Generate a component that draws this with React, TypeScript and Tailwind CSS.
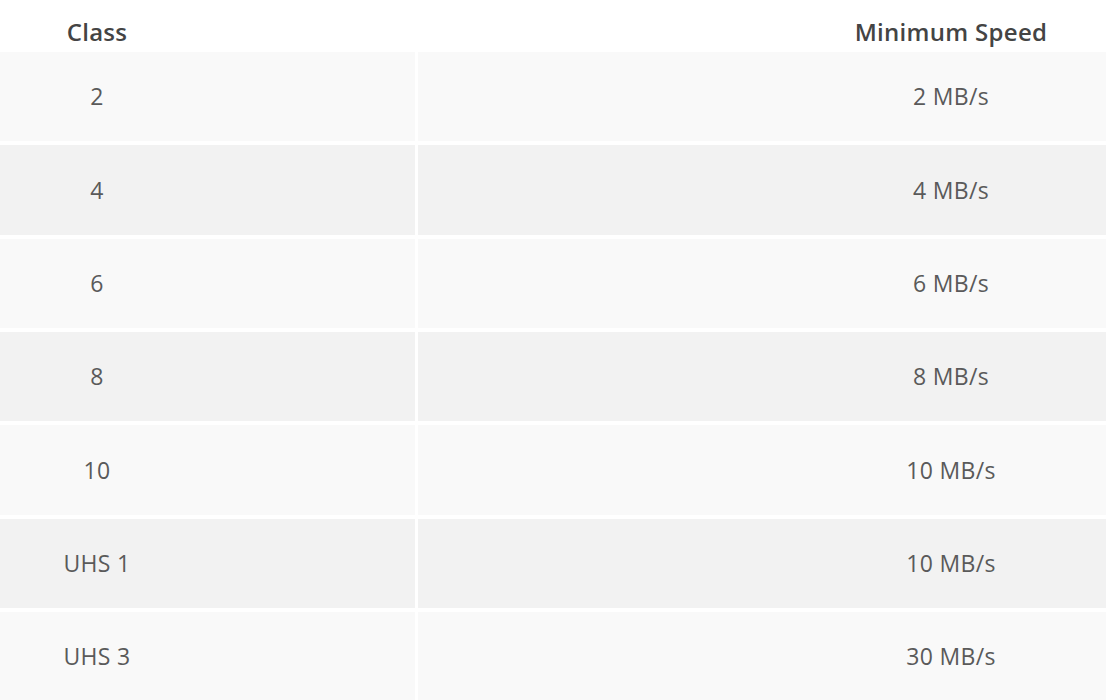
const rows = [
  { cls: "2", speed: "2 MB/s" },
  { cls: "4", speed: "4 MB/s" },
  { cls: "6", speed: "6 MB/s" },
  { cls: "8", speed: "8 MB/s" },
  { cls: "10", speed: "10 MB/s" },
  { cls: "UHS 1", speed: "10 MB/s" },
  { cls: "UHS 3", speed: "30 MB/s" },
];

export default function App() {
  return (
    <div
      className="w-[1106px] h-[700px] overflow-hidden bg-white"
      style={{ fontFamily: '"Open Sans", "Liberation Sans", sans-serif' }}
    >
      {/* Header */}
      <div className="flex h-[52px] items-center pt-[12px] text-[24px] font-semibold tracking-[0.3px] text-[#444]">
        <div className="w-[194px] text-center">Class</div>
        <div className="flex-1" />
        <div className="w-[310px] text-center">Minimum Speed</div>
      </div>

      {/* Body */}
      <div className="flex flex-col gap-[4px]">
        {rows.map((row, i) => (
          <div key={i} className="flex h-[89.33px] gap-[3px]">
            <div
              className={`w-[415px] flex items-center ${
                i % 2 === 0 ? "bg-[#f9f9f9]" : "bg-[#f2f2f2]"
              }`}
            >
              <div className="w-[194px] text-center text-[23px] tracking-[0.3px] text-[#5a5a5a]">
                {row.cls}
              </div>
            </div>
            <div
              className={`flex-1 flex items-center justify-end ${
                i % 2 === 0 ? "bg-[#f9f9f9]" : "bg-[#f2f2f2]"
              }`}
            >
              <div className="w-[310px] text-center text-[23px] tracking-[0.3px] text-[#5a5a5a]">
                {row.speed}
              </div>
            </div>
          </div>
        ))}
      </div>
    </div>
  );
}
